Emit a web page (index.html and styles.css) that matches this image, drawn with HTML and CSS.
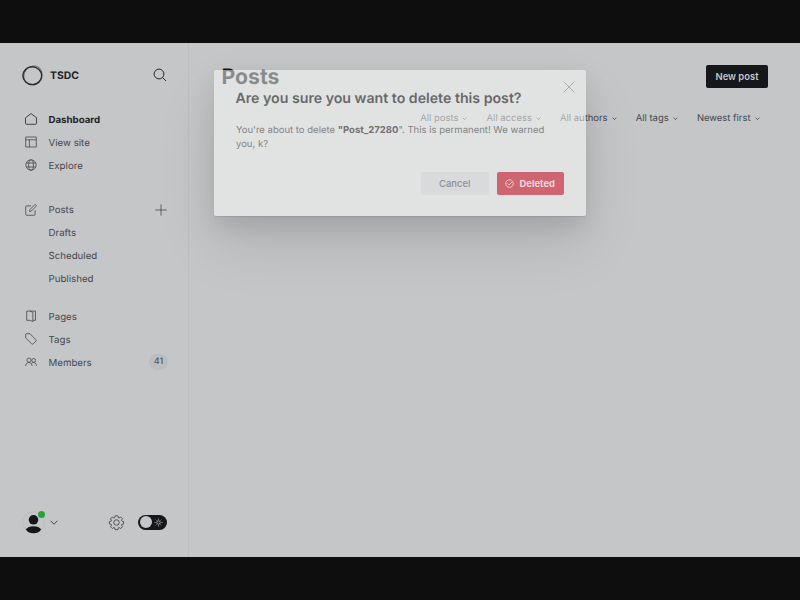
FILE: index.html
```
<!DOCTYPE html>
<html lang="en">
<head>
<meta charset="utf-8">
<title>Posts - TSDC</title>
<link rel="stylesheet" href="styles.css">
</head>
<body>
<div class="app">
  <nav class="sidebar">
    <header class="brand">
      <svg class="logo" viewBox="0 0 22 22"><g fill="none" stroke="#292b2e"><ellipse cx="10.5" cy="11" rx="9.600" ry="9" stroke-width="1.300"/><ellipse cx="11.200" cy="10.500" rx="10" ry="8.900" transform="rotate(-50 11.200 10.500)" stroke-width=".9" opacity=".65"/><ellipse cx="10.700" cy="11" rx="10" ry="9.200" transform="rotate(35 10.700 11)" stroke-width=".8" opacity=".6"/></g></svg>
      <span class="site">TSDC</span>
      <svg class="search" viewBox="0 0 14 14"><circle cx="6" cy="6" r="4.9"/><path d="M9.6 9.6l3.4 3.4"/></svg>
    </header>
    <div class="group">
      <a class="item active"><svg viewBox="0 0 12 12"><path d="M.5 4.700L6 .6l5.500 4.100v5.600q0 1-1 1h-9q-1 0-1-1z"/></svg><span>Dashboard</span></a>
      <a class="item"><svg viewBox="0 0 12 12"><path d="M.7 1h10.600v10H.7zM.7 3.800h10.600M4.400 3.800V11"/></svg><span>View site</span></a>
      <a class="item"><svg viewBox="0 0 12 12"><circle cx="6" cy="6" r="5.200"/><ellipse cx="6" cy="6" rx="2.400" ry="5.200"/><path d="M1.300 4h9.400M1.300 8h9.400"/></svg><span>Explore</span></a>
    </div>
    <div class="group posts">
      <a class="item"><svg viewBox="0 0 12 12"><path d="M6 1.900H1.700q-1 0-1 1v7.400q0 1 1 1h7.400q1 0 1-1V6.300M4.500 7.600l.4-2L9.600.9q.7-.5 1.300.1t.1 1.300L6.400 7.100z"/></svg><span>Posts</span><svg class="plus" viewBox="0 0 12 12"><path d="M6 .4v11.200M.4 6h11.200"/></svg></a>
      <a class="item sub"><span>Drafts</span></a>
      <a class="item sub"><span>Scheduled</span></a>
      <a class="item sub"><span>Published</span></a>
    </div>
    <div class="group">
      <a class="item"><svg viewBox="0 0 12 12"><path d="M1.700 1.100h3.100l3.100 1.200v9.200l-3-1.200H1.700zM4.800 1.100h5.700v9.200H7.900"/></svg><span>Pages</span></a>
      <a class="item"><svg viewBox="0 0 12 12"><path d="M.7 1.300q0-.6.6-.6H5l5.900 6q.6.700 0 1.400l-2.700 2.800q-.7.600-1.400 0L.7 5z"/></svg><span>Tags</span></a>
      <a class="item"><svg viewBox="0 0 12 12"><circle cx="4" cy="4.100" r="2.100"/><circle cx="8.700" cy="4.400" r="1.900"/><path d="M.5 10q.2-3.400 3.400-3.600 3.100.2 3.300 3.600M6.600 7.200q1-.9 2.400-.7 2.200.3 2.600 3.300"/></svg><span>Members</span><b class="badge">41</b></a>
    </div>
    <footer class="foot">
      <div class="avatar"><svg viewBox="0 0 24 24"><circle cx="12" cy="12" r="11.200" fill="none" stroke="#b9babc" stroke-width=".8"/><circle cx="12" cy="9.200" r="5" fill="#15171a"/><path d="M4 19.300q2.200-3.500 8-3.500t8 3.500q-2.700 4-8 4t-8-4z" fill="#15171a"/></svg><i class="online"></i></div>
      <svg class="caret" viewBox="0 0 8 5"><path d="M.5.7L4 4.200 7.500.7"/></svg>
      <svg class="gear" viewBox="0 0 16 16"><circle cx="8" cy="8" r="2.900"/><path d="M6.500.9h3l.5 2 .7.300 1.800-1.100 1.900 1.900-1.100 1.800.3.700 2 .5v2.500l-2 .5-.3.700 1.100 1.800-1.900 1.900-1.800-1.100-.7.300-.5 2h-3l-.5-2-.7-.3-1.800 1.100-1.900-1.900 1.100-1.800-.3-.7-2-.5V7l2-.5.3-.7L1.600 4l1.900-1.900 1.800 1.100.7-.3z" stroke-linejoin="round"/></svg>
      <div class="toggle"><i></i><svg viewBox="0 0 10 10"><circle cx="5" cy="5" r="1.900"/><path d="M5 .6v1.200M5 8.200v1.200M.6 5h1.200M8.200 5h1.200M1.900 1.900l.8.800M7.300 7.300l.8.800M8.100 1.900l-.8.800M2.700 7.300l-.8.800"/></svg></div>
    </footer>
  </nav>
  <main class="main">
    <div class="titlebar"><h1>Posts</h1><button class="new">New post</button></div>
    <div class="filters">
      <span>All posts<svg viewBox="0 0 6 4"><path d="M.7.7L3 3 5.300.7"/></svg></span>
      <span>All access<svg viewBox="0 0 6 4"><path d="M.7.7L3 3 5.300.7"/></svg></span>
      <span>All authors<svg viewBox="0 0 6 4"><path d="M.7.7L3 3 5.300.7"/></svg></span>
      <span>All tags<svg viewBox="0 0 6 4"><path d="M.7.7L3 3 5.300.7"/></svg></span>
      <span>Newest first<svg viewBox="0 0 6 4"><path d="M.7.7L3 3 5.300.7"/></svg></span>
    </div>
  </main>
  <section class="modal" role="dialog">
    <svg class="close" viewBox="0 0 12 12"><path d="M.6.6l10.800 10.800M11.400.6L.6 11.400"/></svg>
    <h2>Are you sure you want to delete this post?</h2>
    <p>You're about to delete <strong>"Post_27280</strong>". This is permanent! We warned<br>you, k?</p>
    <div class="actions">
      <button class="cancel">Cancel</button>
      <button class="deleted"><svg viewBox="0 0 10 10"><path d="M9 3.700A4.200 4.200 0 1 1 7.400 1.600M3 4.900l1.700 1.700L9 2"/></svg>Deleted</button>
    </div>
  </section>
</div>
</body>
</html>
```
FILE: styles.css
```
* { box-sizing: border-box; }
body {
  margin: 0;
  height: 600px;
  padding: 43px 0;
  background: #0d0e0d;
  overflow: hidden;
  font-family: Inter, "Liberation Sans", sans-serif;
  font-size: 9.45px;
  text-rendering: geometricPrecision;
  color: #45484c;
}
h1, h2, p { margin: 0; }
button { border: 0; padding: 0; font: inherit; }
svg { display: block; flex: none; overflow: visible; fill: none; stroke: currentColor; }
.app {
  position: relative;
  display: grid;
  grid-template-columns: 189px 1fr;
  height: 514px;
  background: #c5c6c8;
  overflow: hidden;
}
.sidebar {
  display: flex;
  flex-direction: column;
  border-right: 1px solid #bdbec0;
  padding: 20px 20px 0 22px;
  font-size: 9.7px;
}
.brand { display: flex; align-items: center; height: 25px; margin-bottom: 20px; }
.logo { width: 21.5px; height: 21.5px; }
.site { margin-left: 6.500px; font-size: 10.4px; font-weight: 700; color: #202225; }
.search { width: 14px; height: 14px; margin-left: auto; margin-right: 1px; margin-top: -1px; color: #25272a; }
.group { margin-bottom: 21.500px; }
.posts { margin-bottom: 14.500px; }
.item { display: flex; align-items: center; height: 23px; padding-left: 3px; }
.item span { padding-top: 1px; }
.posts .item span { padding-top: .5px; }
.item svg { width: 12px; height: 12px; margin-right: 11.500px; margin-top: -1px; stroke-width: .8; }
.item.sub { padding-left: 26.500px; }
.item.active { color: #202225; font-weight: 700; }
.item .plus { margin: -1px 1px 0 auto; }
.badge {
  margin-left: auto;
  margin-top: -1px;
  width: 19px;
  height: 16px;
  border-radius: 8px;
  background: #bbbdbf;
  font-weight: 500;
  font-size: 9px;
  line-height: 16px;
  text-align: center;
  color: #55595d;
}
.foot { display: flex; align-items: center; margin-top: auto; height: 30px; margin-bottom: 20px; }
.avatar { position: relative; width: 23px; height: 23px; }
.avatar svg { width: 23px; height: 23px; stroke: none; }
.online { position: absolute; left: 16px; top: .5px; width: 7px; height: 7px; border-radius: 50%; background: #28a537; }
.caret { width: 8px; height: 5px; margin-left: 5px; }
.gear { width: 15px; height: 15px; margin-left: auto; stroke-width: .95; }
.toggle {
  display: flex;
  align-items: center;
  gap: 2px;
  width: 29px;
  height: 15px;
  margin: 0 1px 0 14px;
  padding: 0 1.500px;
  border-radius: 8px;
  background: #15171a;
}
.toggle i { width: 12.500px; height: 12.500px; border-radius: 50%; background: #c5c6c8; }
.toggle svg { width: 9px; height: 9px; color: #b5b6b8; stroke-width: .95; }
.main { padding: 20.500px 32px 0 32.500px; }
.titlebar { display: flex; justify-content: space-between; height: 24px; }
h1 { font-size: 21.2px; line-height: 26px; font-weight: 700; color: #15171a; }
.new {
  width: 62px;
  height: 23px;
  margin-top: 1px;
  border-radius: 2px;
  background: #15171a;
  color: #c5c6c8;
  font-weight: 600;
}
.filters { display: flex; justify-content: flex-end; margin: 22px 8.500px 0 0; height: 18px; line-height: 18px; gap: 19.200px; }
.filters span { display: flex; align-items: center; gap: 4px; white-space: nowrap; }
.filters svg { width: 5px; height: 3.500px; }
.modal {
  position: absolute;
  left: 214px;
  top: 27px;
  width: 372px;
  height: 146px;
  padding: 19px 22px 0;
  border-radius: 2px;
  background: rgba(253, 255, 252, .5);
  box-shadow: 0 1px 1px rgba(0, 0, 0, .08), 0 11px 24px rgba(0, 0, 0, .1), 0 28px 60px rgba(0, 0, 0, .1);
}
.close { position: absolute; right: 11px; top: 11px; width: 12px; height: 12px; color: #a5a7a7; stroke-width: .9; }
h2 { margin-left: -.5px; font-size: 14.170px; line-height: 20px; font-weight: 600; color: #68696b; white-space: nowrap; }
.modal p { margin-top: 15px; font-size: 9.520px; line-height: 14px; color: #808385; white-space: nowrap; }
.modal strong { color: #707274; }
.actions { display: flex; justify-content: flex-end; gap: 8px; margin-top: 20px; }
.actions button { display: flex; align-items: center; justify-content: center; height: 23px; width: 67.500px; border-radius: 2px; font-weight: 500; }
.actions .cancel { background: #d9dadc; color: #8d9092; }
.actions .deleted { gap: 5px; background: #cf6570; color: #eadadb; font-weight: 700; }
.deleted svg { width: 9px; height: 9px; }
```
